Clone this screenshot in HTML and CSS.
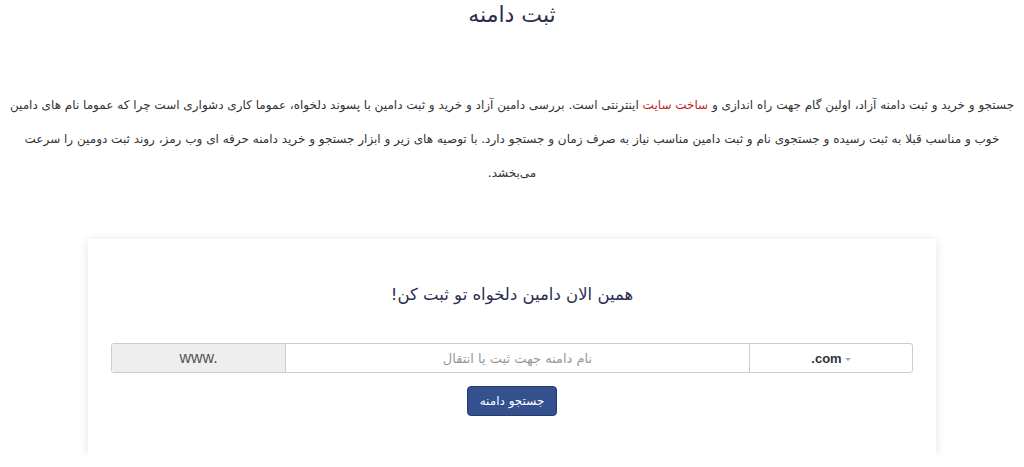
FILE: index.html
```html
<!DOCTYPE html>
<html lang="fa" dir="rtl">

<head>
    <meta charset="UTF-8">
    <meta name="viewport" content="width=device-width, initial-scale=1.0">
    <title>ثبت دامنه</title>
    <link rel="stylesheet" href="styles.css">
</head>

<body>
    <div class="page">
        <h1 class="page-title">ثبت دامنه</h1>
        <p class="intro">
            جستجو و خرید و ثبت  دامنه آزاد، اولین  گام جهت  راه اندازی  و <a href="#" class="intro-link">ساخت سایت</a> اینترنتی است. بررسی دامین آزاد و خرید و ثبت  دامین  با پسوند دلخواه، عموما کاری دشواری است  چرا که عموما نام های دامین
            خوب  و مناسب  قبلا به ثبت  رسیده و جستجوی نام و ثبت  دامین  مناسب  نیاز به صرف  زمان  و جستجو دارد. با توصیه های زیر و ابزار جستجو و خرید دامنه حرفه ای وب  رمز، روند ثبت  دومین  را سرعت
            می‌بخشد.
        </p>

        <!-- Domain search box -->
        <div class="search-card">
            <h2 class="search-title">همین الان دامین دلخواه تو ثبت کن!</h2>
            <form class="domain-group" onsubmit="return false;">
                <div class="tld-select">
                    <span>.com</span>
                    <span class="caret"></span>
                </div>
                <input type="text" class="domain-input" placeholder="نام دامنه جهت ثبت یا انتقال">
                <div class="www-addon">www.</div>
            </form>
            <button class="search-btn" type="button">جستجو دامنه</button>
        </div>
    </div>
</body>

</html>
```

FILE: styles.css
```css
* {
    margin: 0;
    padding: 0;
    box-sizing: border-box;
}

body {
    background-color: #fff;
    color: #333;
    font-family: 'DejaVu Sans', sans-serif;
}

.page {
    padding: 0 8px;
    text-align: center;
}

.page-title {
    font-size: 22px;
    font-weight: normal;
    line-height: 30px;
    color: #2b2d4e;
}

.intro {
    margin-top: 58px;
    font-size: 12px;
    line-height: 34px;
    color: #333;
}

.intro-link {
    color: #c0271e;
    text-decoration: none;
}

.search-card {
    width: 848px;
    margin: 49px auto 0;
    padding: 41px 23px 39px;
    background-color: #fff;
    box-shadow: 0 1px 10px rgba(0, 0, 0, 0.11);
}

.search-title {
    font-size: 16.5px;
    font-weight: normal;
    line-height: 30px;
    color: #2b2d4e;
    margin-bottom: 33px;
}

.domain-group {
    display: flex;
    height: 30px;
    border: 1px solid #ccc;
    border-radius: 3px;
}

.tld-select {
    width: 163px;
    display: flex;
    justify-content: center;
    align-items: center;
    gap: 3px;
    direction: ltr;
    font-family: 'Liberation Sans', sans-serif;
    font-size: 13px;
    font-weight: bold;
    color: #333;
    border-left: 1px solid #ccc;
}

.caret {
    width: 0;
    height: 0;
    border-left: 3px solid transparent;
    border-right: 3px solid transparent;
    border-top: 3px solid #aaa;
    margin-top: 3px;
}

.domain-input {
    flex: 1;
    border: none;
    outline: none;
    text-align: center;
    font-family: 'DejaVu Sans', sans-serif;
    font-size: 13px;
    letter-spacing: 1px;
    color: #333;
    background: #fff;
}

.domain-input::placeholder {
    color: #999;
}

.www-addon {
    width: 174px;
    display: flex;
    justify-content: center;
    align-items: center;
    direction: ltr;
    background-color: #eee;
    border-right: 1px solid #ccc;
    font-family: 'Liberation Sans', sans-serif;
    font-size: 16px;
    color: #555;
}

.search-btn {
    display: block;
    margin: 13px auto 0;
    width: 90px;
    height: 30px;
    background-color: #34508d;
    border: 1px solid #263b6b;
    border-radius: 4px;
    color: #fff;
    font-family: 'DejaVu Sans', sans-serif;
    font-size: 12px;
    cursor: pointer;
}
```
